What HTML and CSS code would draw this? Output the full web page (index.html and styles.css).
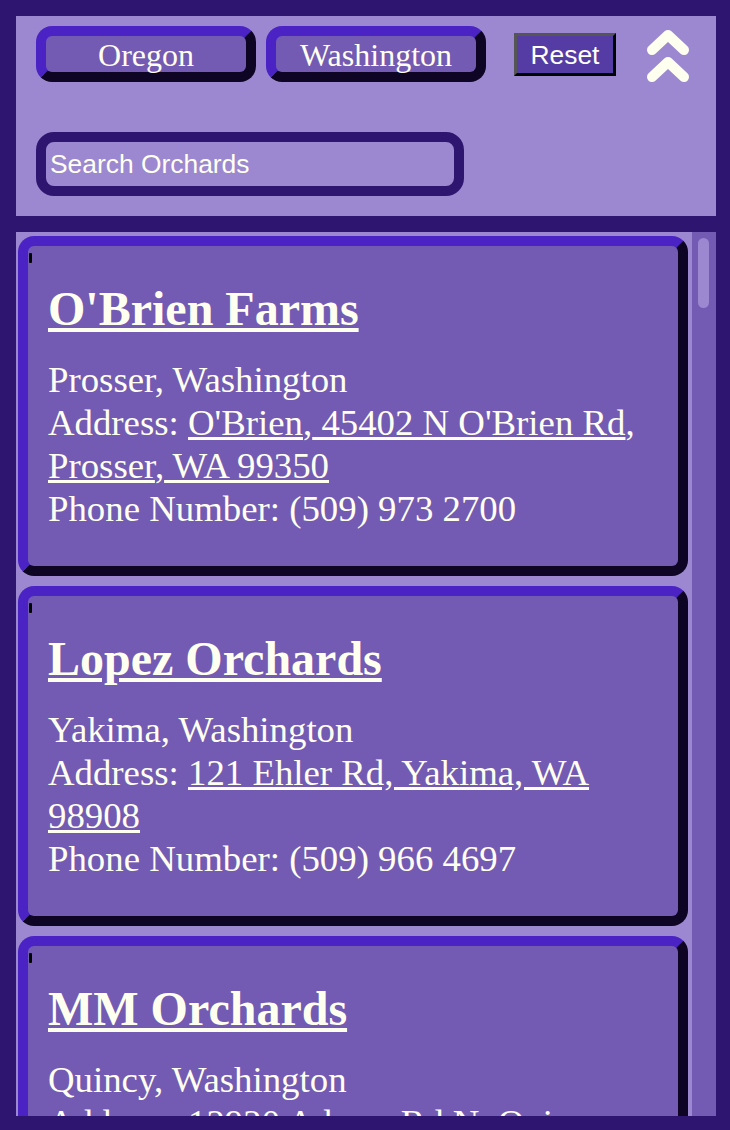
FILE: index.html
```html
<!DOCTYPE html>
<html lang="en">
<head>
<meta charset="utf-8">
<title>Orchards</title>
<link rel="stylesheet" href="styles.css">
</head>
<body>
  <header class="controls">
    <div class="controls-row">
      <button class="state-btn">Oregon</button>
      <button class="state-btn">Washington</button>
      <button class="reset-btn">Reset</button>
      <span class="top-icon" aria-label="Back to top">
        <svg width="50" height="60" viewBox="0 0 50 60">
          <path d="M9 24 L25 9 L41 24" fill="none" stroke="#fffff0" stroke-width="10" stroke-linecap="round" stroke-linejoin="round"/>
          <path d="M9 51 L25 36 L41 51" fill="none" stroke="#fffff0" stroke-width="10" stroke-linecap="round" stroke-linejoin="round"/>
        </svg>
      </span>
    </div>
    <input class="search" type="text" placeholder="Search Orchards">
  </header>

  <main class="list-wrap">
    <section class="list">
      <article class="card">
        <span class="tick"></span>
        <div class="card-body">
          <h2 class="card-title"><a href="#">O'Brien Farms</a></h2>
          <p class="card-info">Prosser, Washington<br>Address: <a href="#">O'Brien</a>,<a href="#"> 45402 N O'Brien Rd</a>,<a href="#"> Prosser</a>,<a href="#"> WA 99350</a><br>Phone Number: (509) 973 2700</p>
        </div>
      </article>
      <article class="card">
        <span class="tick"></span>
        <div class="card-body">
          <h2 class="card-title"><a href="#">Lopez Orchards</a></h2>
          <p class="card-info">Yakima, Washington<br>Address: <a href="#">121 Ehler Rd, Yakima, WA 98908</a><br>Phone Number: (509) 966 4697</p>
        </div>
      </article>
      <article class="card">
        <span class="tick"></span>
        <div class="card-body">
          <h2 class="card-title"><a href="#">MM Orchards</a></h2>
          <p class="card-info">Quincy, Washington<br>Address: <a href="#">12920 Adams Rd N, Quincy, WA</a></p>
        </div>
      </article>
    </section>
    <div class="scroll-track"><div class="scroll-thumb"></div></div>
  </main>
</body>
</html>
```

FILE: styles.css
```css
html, body {
  height: 100%;
}

body {
  margin: 0;
  padding: 16px 14px 0 16px;
  box-sizing: border-box;
  background: #2e1670;
  overflow: hidden;
}

.controls {
  height: 200px;
  box-sizing: border-box;
  background: #9c88d0;
  padding: 10px 20px 20px 20px;
  display: flex;
  flex-direction: column;
  align-items: flex-start;
}

.controls-row {
  display: flex;
  align-items: center;
  height: 56px;
}

.state-btn {
  width: 220px;
  height: 56px;
  box-sizing: border-box;
  border: 10px solid;
  border-color: #4b23c4 #0d0523 #0d0523 #4b23c4;
  border-radius: 16px;
  background: #735bb3;
  color: #fffff0;
  font-family: "Liberation Serif", "Times New Roman", serif;
  font-size: 32px;
  line-height: 36px;
  padding: 1px 0 0 0;
  margin: 0 10px 0 0;
}

.reset-btn {
  margin: 1px 0 0 18px;
  width: 102px;
  height: 43px;
  box-sizing: border-box;
  border: 3px solid;
  border-color: #555555 #000000 #000000 #555555;
  background: #553ca5;
  color: #fffff6;
  font-family: "Liberation Sans", Arial, sans-serif;
  font-size: 26.4px;
  line-height: 30px;
  padding: 0;
}

.top-icon {
  display: block;
  width: 50px;
  height: 60px;
  margin: 4px 0 0 27px;
}

.top-icon svg {
  display: block;
}

.search {
  margin-top: 50px;
  width: 428px;
  height: 64px;
  box-sizing: border-box;
  border: 10px solid #2e1670;
  border-radius: 18px;
  background: #9c88d0;
  color: #fffff0;
  font-family: "Liberation Sans", Arial, sans-serif;
  font-size: 26.4px;
  padding: 0 4px;
  outline: none;
}

.search::placeholder {
  color: #fffff0;
  opacity: 1;
}

.list-wrap {
  margin-top: 16px;
  height: 884px;
  display: flex;
}

.list {
  flex: 1;
  background: #9c88d0;
  padding: 4px 4px 0 2px;
  display: flex;
  flex-direction: column;
  gap: 10px;
  overflow: hidden;
}

.scroll-track {
  width: 24px;
  flex: none;
  background: #735bb3;
  padding: 6px 7px 0 6px;
  box-sizing: border-box;
}

.scroll-thumb {
  height: 70px;
  border-radius: 6px;
  background: #9c88d0;
}

.card {
  flex: none;
  display: flex;
  flex-direction: column;
  align-items: flex-start;
  border: 10px solid;
  border-color: #4b23c4 #0d0523 #0d0523 #4b23c4;
  border-radius: 16px;
  background: #735bb3;
  padding: 7px 0 36px 1px;
  color: #fffff0;
  font-family: "Liberation Serif", "Times New Roman", serif;
}

.tick {
  display: block;
  width: 2.5px;
  height: 10px;
  background: #000000;
  border-radius: 1px;
}

.card-body {
  padding: 0 19px;
}

.card-title {
  margin: 18px 0 0 0;
  font-size: 48px;
  font-weight: bold;
  line-height: normal;
}

.card-title a,
.card-info a {
  color: #fffff0;
  text-decoration: underline;
}

.card-info {
  margin: 22px 0 0 0;
  font-size: 36.8px;
  line-height: normal;
}
```
